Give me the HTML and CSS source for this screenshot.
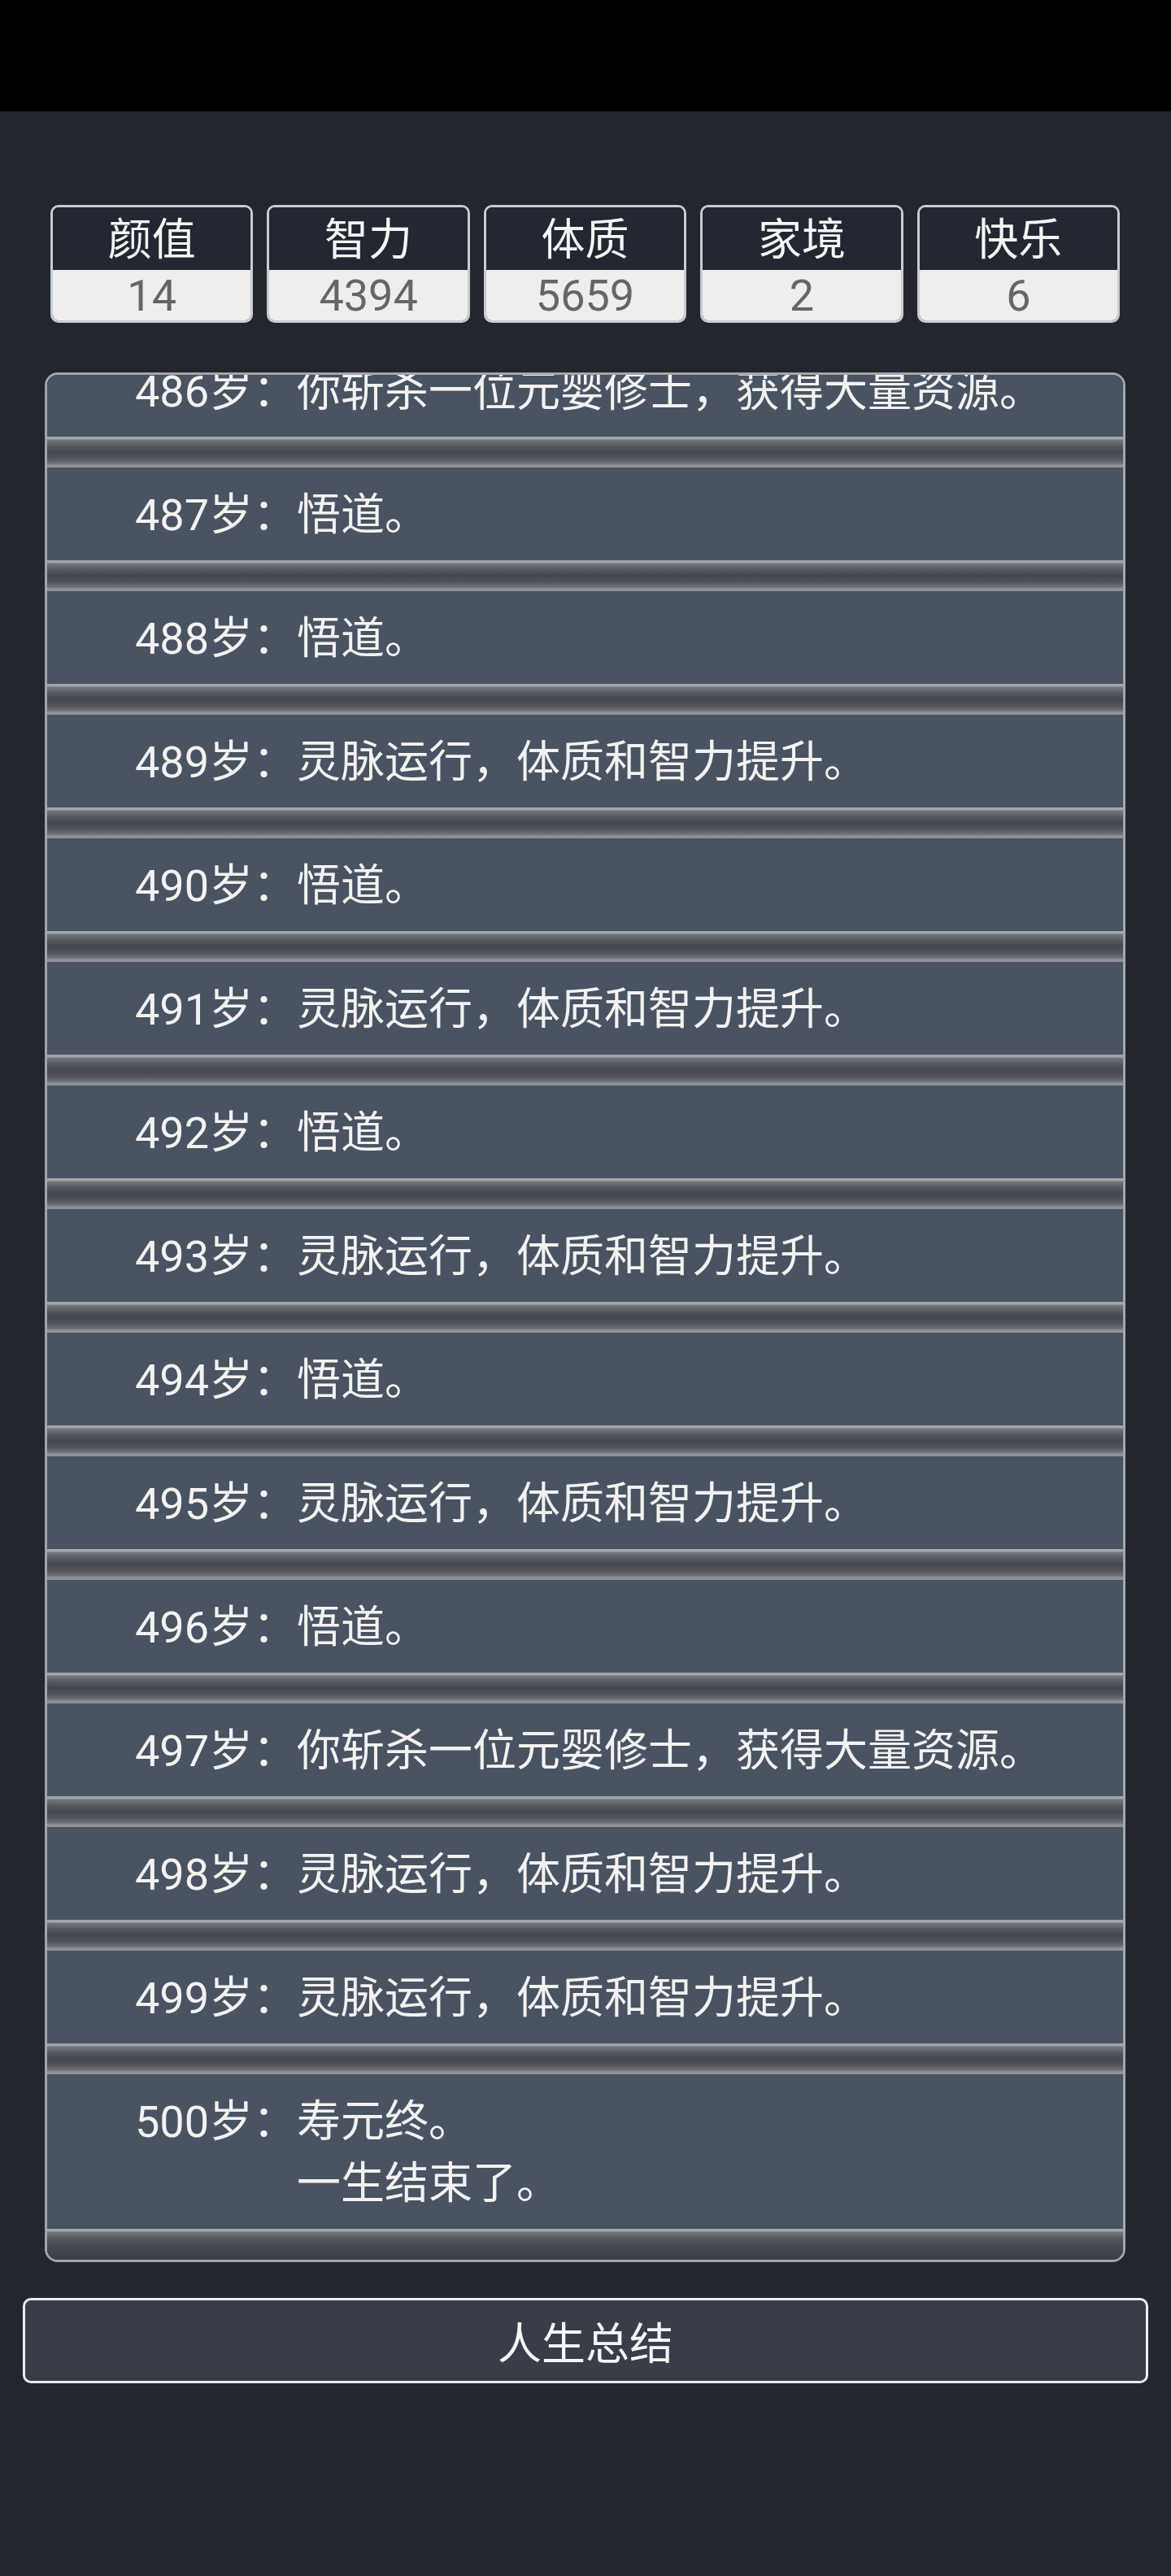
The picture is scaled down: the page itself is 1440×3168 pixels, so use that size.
FILE: index.html
```html
<!DOCTYPE html>
<html lang="zh-CN">
<head>
    <meta charset="UTF-8">
    <meta name="viewport" content="width=device-width, initial-scale=1.0">
    <title>人生重开</title>
    <link rel="stylesheet" href="styles.css">
</head>
<body>
    <div class="status-bar"></div>

    <div class="stats">
        <div class="stat"><div class="stat-name">颜值</div><div class="stat-value">14</div></div>
        <div class="stat"><div class="stat-name">智力</div><div class="stat-value">4394</div></div>
        <div class="stat"><div class="stat-name">体质</div><div class="stat-value">5659</div></div>
        <div class="stat"><div class="stat-name">家境</div><div class="stat-value">2</div></div>
        <div class="stat"><div class="stat-name">快乐</div><div class="stat-value">6</div></div>
    </div>

    <div class="panel" id="panel">
        <ul id="lifeLog"></ul>
    </div>

    <div class="actions">
        <button class="summary-btn">人生总结</button>
    </div>

    <script>
        const events = [
    [486, ["你斩杀一位元婴修士，获得大量资源。"]],
    [487, ["悟道。"]],
    [488, ["悟道。"]],
    [489, ["灵脉运行，体质和智力提升。"]],
    [490, ["悟道。"]],
    [491, ["灵脉运行，体质和智力提升。"]],
    [492, ["悟道。"]],
    [493, ["灵脉运行，体质和智力提升。"]],
    [494, ["悟道。"]],
    [495, ["灵脉运行，体质和智力提升。"]],
    [496, ["悟道。"]],
    [497, ["你斩杀一位元婴修士，获得大量资源。"]],
    [498, ["灵脉运行，体质和智力提升。"]],
    [499, ["灵脉运行，体质和智力提升。"]],
    [500, ["寿元终。", "一生结束了。"]]
];

function renderLog() {
    let list = document.getElementById("lifeLog");
    list.innerHTML = "";

    events.forEach(([age, lines]) => {
        let li = document.createElement("li");
        li.innerHTML = `
            <div class="entry">
                <span class="age">${age}岁：</span>
                <div class="text">${lines.join("<br>")}</div>
            </div>
        `;
        list.appendChild(li);
    });

    // the log is scrolled to its end
    let panel = document.getElementById("panel");
    panel.scrollTop = panel.scrollHeight;
}

renderLog();
    </script>
</body>
</html>
```

FILE: styles.css
```css
body {
    margin: 0;
    padding: 0;
    min-height: 3168px;
    background: #21262f;
    color: #f2f2f2;
    font-family: Roboto, "Noto Sans CJK SC", sans-serif;
}

.status-bar {
    height: 137px;
    background: #000;
}

.stats {
    display: flex;
    gap: 17px;
    padding: 115px 63px 0 62px;
}

.stat {
    flex: 1;
    border: 3px solid #c9cbcf;
    border-radius: 10px;
    overflow: hidden;
    text-align: center;
}

.stat-name {
    height: 77px;
    line-height: 82px;
    font-size: 54px;
    background: #222731;
    color: #f5f5f5;
}

.stat-value {
    height: 62px;
    line-height: 64px;
    font-size: 54px;
    background: #eeeeee;
    color: #666;
}

.panel {
    height: 2318px;
    margin: 61px 56px 0 55px;
    border: 3px solid #a2a5aa;
    border-radius: 16px;
    background: #3c3e46;
    overflow-y: auto;
    scrollbar-width: none;
}

.panel::-webkit-scrollbar {
    display: none;
}

ul {
    list-style: none;
    margin: 0;
    padding: 0;
}

li::after {
    content: "";
    display: block;
    height: 38px;
    background: linear-gradient(to bottom,
        #a2a5a9 0, #a2a5a9 3px,
        #74777d 4px, #55575f 12px,
        #45474f 19px, #53555d 27px,
        #6f7278 33px, #8e9196 35px, #8e9196 38px);
}

li:last-child::after {
    background: linear-gradient(to bottom,
        #a2a5a9 0, #a2a5a9 3px,
        #74777d 4px, #55575f 12px,
        #45474f 22px, #3c3e46 38px);
}

.entry {
    display: flex;
    padding: 21px 0 17px 108px;
    background: #4a5361;
    font-size: 54px;
    line-height: 76px;
}

.age {
    white-space: nowrap;
}

.text {
    flex: 1;
}

.actions {
    padding: 44px 28px 0 28px;
}

.summary-btn {
    display: block;
    width: 100%;
    height: 105px;
    border: 3px solid #ececec;
    border-radius: 10px;
    background: #393d48;
    color: #f5f5f5;
    font-family: Roboto, "Noto Sans CJK SC", sans-serif;
    font-size: 54px;
    cursor: pointer;
}
```
